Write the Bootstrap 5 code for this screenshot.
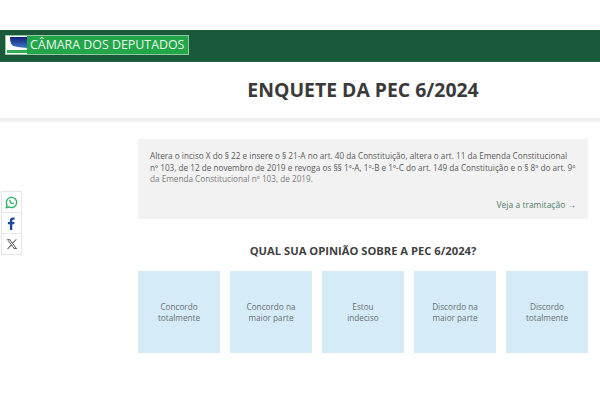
<!DOCTYPE html>
<html lang="pt-BR">
<head>
    <meta charset="UTF-8">
    <meta name="viewport" content="width=device-width, initial-scale=1">
    <title>Enquete da PEC 6/2024</title>
    <link href="https://cdn.jsdelivr.net/npm/bootstrap@5.3.0/dist/css/bootstrap.min.css" rel="stylesheet">
    <style>
        body {
            font-family: "Open Sans", "Liberation Sans", sans-serif;
            color: #555;
            background: #fff;
            height: 400px;
            overflow: hidden;
            position: relative;
        }
        .top-space { height: 30px; }
        .site-bar {
            height: 32px;
            background: #1a5a3a;
            padding: 5px 0 0 5px;
        }
        .site-logo {
            width: 184px;
            height: 20px;
            background: #23a54a;
            border: 1px solid #8fc9a0;
        }
        .site-logo svg { flex: none; }
        .site-name {
            color: #e9f5ec;
            font-size: 12.4px;
            line-height: 18px;
            margin-left: 3px;
            white-space: nowrap;
        }
        .title-area {
            height: 59px;
            border-bottom: 3px solid #eeeeee;
            box-shadow: 0 1px 2px #f2f2f2;
        }
        .title-area h1 {
            color: #3a3a3a;
            font-size: 19.4px;
            font-weight: 700;
            line-height: 56px;
            margin: 0 0 0 138px;
            width: 450px;
            text-align: center;
        }
        .content-col {
            margin: 18px 12px 0 138px;
        }
        .pec-box {
            height: 80px;
            background: #f2f2f2;
            padding: 11px 12px;
            font-size: 8.2px;
            line-height: 11.7px;
            color: #5a5a5a;
        }
        .pec-box p {
            margin: 0;
            white-space: nowrap;
        }
        .pec-box .faded { color: #7c7c7c; }
        .pec-link {
            color: #4f8069;
            font-size: 8.5px;
            text-decoration: none;
            margin-top: 14px;
            display: block;
            text-align: right;
        }
        .opinion-title {
            color: #3f3f3f;
            font-size: 11.2px;
            font-weight: 700;
            text-align: center;
            margin: 24px 0 12px;
            line-height: 16px;
        }
        .vote-row { gap: 10px; }
        .vote-opt {
            flex: 1 1 0;
            height: 82px;
            background: #d5ebf8;
            color: #6a6f72;
            font-size: 8.2px;
            line-height: 11.5px;
            text-align: center;
        }
        .share-list {
            position: absolute;
            left: 1px;
            top: 191px;
            width: 21px;
        }
        .share-item {
            height: 22px;
            border: 1px solid #e6e6e6;
            margin-bottom: -1px;
            background: #fff;
        }
    </style>
</head>
<body>

<div class="top-space"></div>

<div class="site-bar">
    <div class="site-logo d-flex align-items-center">
        <svg width="21" height="18" viewBox="0 0 21 18">
            <defs>
                <linearGradient id="logoBlue" x1="0" y1="0" x2="0" y2="1">
                    <stop offset="0" stop-color="#101f7a"/>
                    <stop offset="1" stop-color="#3f78c8"/>
                </linearGradient>
            </defs>
            <rect width="21" height="18" fill="#fff"/>
            <path d="M4 1H21V12C14 11 8 11 6 9 4.500 7.500 4 4 4 1Z" fill="url(#logoBlue)"/>
            <path d="M1 14H21V17H1Z" fill="#2fae55"/>
        </svg>
        <span class="site-name">CÂMARA DOS DEPUTADOS</span>
    </div>
</div>

<div class="title-area">
    <h1>ENQUETE DA PEC 6/2024</h1>
</div>

<div class="share-list">
    <div class="share-item d-flex align-items-center justify-content-center">
        <svg width="13" height="13" viewBox="0 0 16 16" fill="none">
            <path d="M1.5 14.5 2.5 11A6.3 6.3 0 1 1 5 13.5Z" stroke="#2fb567" stroke-width="1.7" stroke-linejoin="round"/>
            <path d="M5.6 5c.7-.9 1.3-.7 1.6.3.2.6-.5.9-.3 1.3.5.9 1.1 1.5 2 1.9.4.2.7-.6 1.2-.4.9.4 1.3.9.5 1.6-1 .9-2.8.3-4-.9S4.800 6 5.600 5Z" fill="#2fb567"/>
        </svg>
    </div>
    <div class="share-item d-flex align-items-center justify-content-center">
        <svg width="13" height="15" viewBox="0 0 16 16">
            <path d="M6 16V9H3.500V6H6V4.200C6 1.700 7.400.5 9.600.5c1 0 1.900.1 2.200.1v2.700h-1.500C9.200 3.300 9 3.900 9 4.700V6h2.700l-.4 3H9v7Z" fill="#1d4a96"/>
        </svg>
    </div>
    <div class="share-item d-flex align-items-center justify-content-center">
        <svg width="12" height="12" viewBox="0 0 16 16">
            <path d="M1 1.500H5.200L15 14.500H10.800ZM2.900 2.500 11.300 13.500H13L4.600 2.500Z" fill="#4a4a4a" fill-rule="evenodd"/>
            <path d="M13 1.500H14.500L9.300 7.400 8.500 6.300ZM6.800 8.700 7.600 9.800 2.900 14.500H1.400Z" fill="#4a4a4a"/>
        </svg>
    </div>
</div>

<div class="content-col">
    <div class="pec-box">
        <p>Altera o inciso X do § 22 e insere o § 21-A no art. 40 da Constituição, altera o art. 11 da Emenda Constitucional<br>nº 103, de 12 de novembro de 2019 e revoga os §§ 1º-A, 1º-B e 1º-C do art. 149 da Constituição e o § 8º do art. 9º<br><span class="faded">da Emenda Constitucional nº 103, de 2019.</span></p>
        <a class="pec-link" href="#">Veja a tramitação →</a>
    </div>

    <h2 class="opinion-title">QUAL SUA OPINIÃO SOBRE A PEC 6/2024?</h2>

    <div class="d-flex vote-row">
        <div class="vote-opt d-flex align-items-center justify-content-center">Concordo<br>totalmente</div>
        <div class="vote-opt d-flex align-items-center justify-content-center">Concordo na<br>maior parte</div>
        <div class="vote-opt d-flex align-items-center justify-content-center">Estou<br>indeciso</div>
        <div class="vote-opt d-flex align-items-center justify-content-center">Discordo na<br>maior parte</div>
        <div class="vote-opt d-flex align-items-center justify-content-center">Discordo<br>totalmente</div>
    </div>
</div>

<script src="https://cdn.jsdelivr.net/npm/bootstrap@5.3.0/dist/js/bootstrap.bundle.min.js"></script>
</body>
</html>
